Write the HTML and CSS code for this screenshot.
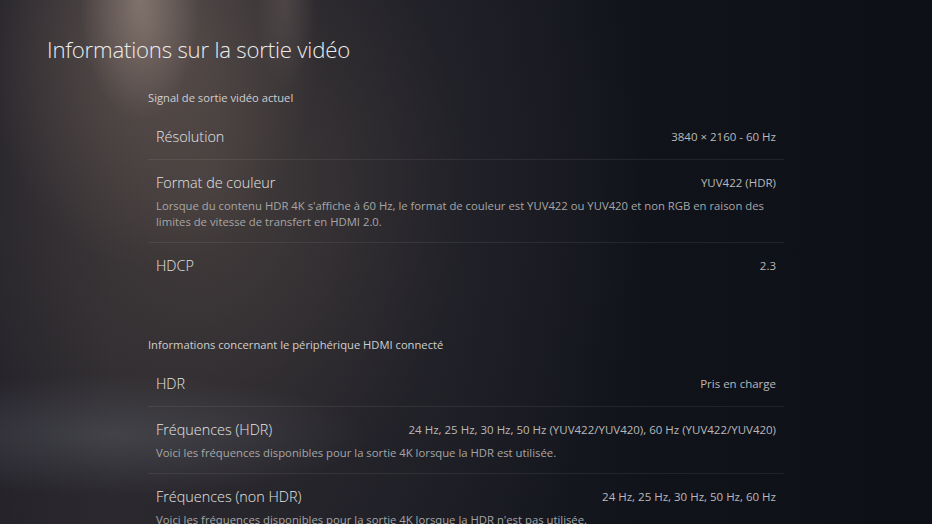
FILE: index.html
```html
<!DOCTYPE html>
<html lang="fr">
<head>
<meta charset="utf-8">
<title>Informations sur la sortie vidéo</title>
<link rel="stylesheet" href="styles.css">
</head>
<body>
<main class="screen">
  <h1 class="title">Informations sur la sortie vidéo</h1>
  <div class="content">
    <section class="group">
      <h2 class="group-title">Signal de sortie vidéo actuel</h2>
      <div class="row">
        <div class="row-head"><span class="label">Résolution</span><span class="value">3840 × 2160 - 60 Hz</span></div>
      </div>
      <div class="row">
        <div class="row-head"><span class="label">Format de couleur</span><span class="value">YUV422 (HDR)</span></div>
        <p class="desc">Lorsque du contenu HDR 4K s'affiche à 60 Hz, le format de couleur est YUV422 ou YUV420 et non RGB en raison des<br>limites de vitesse de transfert en HDMI 2.0.</p>
      </div>
      <div class="row">
        <div class="row-head"><span class="label">HDCP</span><span class="value">2.3</span></div>
      </div>
    </section>
    <section class="group">
      <h2 class="group-title">Informations concernant le périphérique HDMI connecté</h2>
      <div class="row">
        <div class="row-head"><span class="label">HDR</span><span class="value">Pris en charge</span></div>
      </div>
      <div class="row">
        <div class="row-head"><span class="label">Fréquences (HDR)</span><span class="value">24 Hz, 25 Hz, 30 Hz, 50 Hz (YUV422/YUV420), 60 Hz (YUV422/YUV420)</span></div>
        <p class="desc">Voici les fréquences disponibles pour la sortie 4K lorsque la HDR est utilisée.</p>
      </div>
      <div class="row">
        <div class="row-head"><span class="label">Fréquences (non HDR)</span><span class="value">24 Hz, 25 Hz, 30 Hz, 50 Hz, 60 Hz</span></div>
        <p class="desc">Voici les fréquences disponibles pour la sortie 4K lorsque la HDR n'est pas utilisée.</p>
      </div>
    </section>
  </div>
</main>
</body>
</html>
```

FILE: styles.css
```css
html, body {
  margin: 0;
  padding: 0;
  width: 932px;
  height: 524px;
  overflow: hidden;
}

body {
  font-family: "Open Sans", "Noto Sans", sans-serif;
  color: #e2e2e2;
  background-color: #11131b;
  background-image:
    radial-gradient(ellipse 60px 120px at 140px 0px, rgba(165, 146, 136, 0.55), rgba(165, 146, 136, 0) 100%),
    radial-gradient(ellipse 30px 90px at 285px 0px, rgba(140, 126, 118, 0.25), rgba(140, 126, 118, 0) 100%),
    radial-gradient(ellipse 170px 240px at 150px 30px, rgba(125, 108, 100, 0.5), rgba(125, 108, 100, 0) 100%),
    radial-gradient(ellipse 260px 60px at 110px 435px, rgba(95, 99, 108, 0.4), rgba(95, 99, 108, 0) 100%),
    radial-gradient(ellipse 430px 540px at 210px 190px, rgba(72, 64, 62, 0.85), rgba(42, 40, 46, 0.45) 60%, rgba(17, 19, 27, 0) 100%),
    linear-gradient(90deg, #242229 0%, #2c2a2f 12%, #1b1c24 45%, #11131b 70%, #0e1018 100%);
}

.screen {
  padding: 35px 0 0 47px;
}

.title {
  margin: 0;
  font-size: 22.2px;
  line-height: 30px;
  font-weight: 300;
  color: #ececec;
  letter-spacing: -0.2px;
}

.content {
  width: 636px;
  margin: 25px 0 0 101px;
}

.group + .group {
  margin-top: 49px;
}

.group-title {
  margin: 0 0 8px;
  font-size: 11.2px;
  line-height: 16px;
  font-weight: 400;
  color: #cfcfcf;
}

.row {
  padding: 13px 8px 12px;
  border-bottom: 1px solid rgba(255, 255, 255, 0.075);
}

.row:last-child {
  border-bottom: none;
}

.row-head {
  display: flex;
  justify-content: space-between;
  align-items: center;
  height: 20px;
}

.label {
  font-size: 14.4px;
  line-height: 20px;
  font-weight: 300;
  color: #e4e4e4;
}

.value {
  font-size: 11.5px;
  line-height: 16px;
  font-weight: 400;
  color: #b9b9b9;
}

.desc {
  margin: 5px -16px 0 0;
  font-size: 11.3px;
  line-height: 16px;
  color: #a6a6a6;
}
```
